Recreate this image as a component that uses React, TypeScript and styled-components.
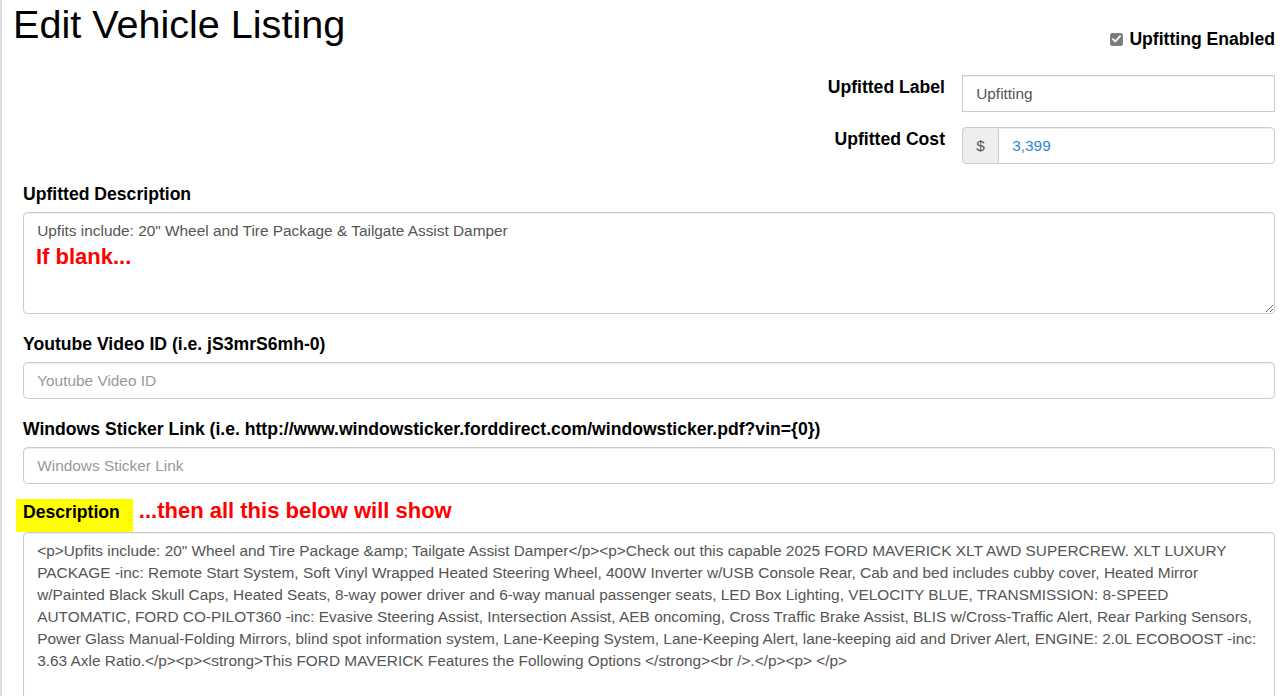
import React from "react";
import styled, { createGlobalStyle } from "styled-components";

const GlobalStyle = createGlobalStyle`
  html, body { margin: 0; padding: 0; background: #fff; }
  body { font-family: "Liberation Sans", Arial, Helvetica, sans-serif; }
`;

const Page = styled.div`
  box-sizing: border-box;
  min-height: 696px;
  border-left: 2px solid #dcdcdc;
  padding: 0 10px 0 8px;
`;

const Header = styled.div`
  display: flex;
  justify-content: space-between;
  align-items: flex-start;
`;

const Title = styled.h1`
  margin: 3px 0 0 3px;
  font-size: 39.6px;
  font-weight: 400;
  line-height: 1.1;
  color: #000;
`;

const CheckLabel = styled.label`
  display: flex;
  align-items: center;
  gap: 6px;
  margin-top: 27px;
  font-size: 17.6px;
  font-weight: 700;
  line-height: 25px;
  color: #000;
`;

const CheckBox = styled.span`
  box-sizing: border-box;
  width: 13px;
  height: 13px;
  display: inline-flex;
  align-items: center;
  justify-content: center;
  background: #7b7b7b;
  border: 1px solid #858585;
  border-radius: 2px;
  margin-top: -1px;

  svg {
    display: block;
  }
`;

const Form = styled.div`
  padding-left: 13px;
  margin-top: 22px;
`;

const InlineRows = styled.div`
  display: flex;
  flex-direction: column;
  gap: 14px;
  margin-bottom: 16px;
`;

const InlineRow = styled.div`
  display: flex;
  justify-content: flex-end;
  align-items: flex-start;
  gap: 17px;
`;

const InlineLabel = styled.label`
  padding-top: 1px;
  font-size: 17.6px;
  font-weight: 700;
  line-height: 25px;
  color: #000;
`;

const Input = styled.input<{ $square?: boolean; $width?: number }>`
  display: block;
  box-sizing: border-box;
  width: ${(p) => (p.$width ? `${p.$width}px` : "100%")};
  height: 37px;
  margin: 0;
  padding: 6.6px 13.2px;
  font: 15.4px "Liberation Sans", Arial, sans-serif;
  color: #555;
  background: #fff;
  border: 1px solid #ccc;
  border-radius: ${(p) => (p.$square ? "0" : "4.4px")};
  box-shadow: inset 0 1px 1px rgba(0, 0, 0, 0.075);
  outline: none;

  &::placeholder {
    color: #999;
  }
`;

const OffsetInput = styled(Input)`
  margin-top: 1px;
`;

const InputGroup = styled.div`
  display: flex;
  width: 313px;
  height: 37px;
  margin-top: 1px;
`;

const Addon = styled.span`
  box-sizing: border-box;
  width: 36px;
  display: flex;
  align-items: center;
  justify-content: center;
  background: #eee;
  color: #555;
  font-size: 15.4px;
  border: 1px solid #ccc;
  border-right: 0;
  border-radius: 4.4px 0 0 4.4px;
`;

const CostInput = styled(Input)`
  flex: 1;
  width: auto;
  color: #2a88d8;
  border-radius: 0 4.4px 4.4px 0;
`;

const Group = styled.div`
  margin-bottom: 16px;
`;

const BlockLabel = styled.label`
  display: block;
  padding-top: 2px;
  margin-bottom: 5px;
  font-size: 17.6px;
  font-weight: 700;
  line-height: 25px;
  color: #000;
`;

const DescSection = styled.div`
  margin-top: -1px;
`;

const DescHead = styled.div`
  display: flex;
  align-items: baseline;
  gap: 6px;
`;

const HighlightLabel = styled.label`
  display: inline-block;
  margin-left: -7px;
  padding: 1px 13px 7px 7px;
  background: #ffff00;
  font-size: 17.6px;
  font-weight: 700;
  line-height: 25px;
  color: #000;
`;

const Note = styled.span<{ $size: number }>`
  color: #ff0000;
  font-weight: 700;
  font-size: ${(p) => p.$size}px;
  line-height: ${(p) => p.$size}px;
`;

const AreaWrap = styled.div`
  position: relative;
`;

const OverNote = styled(Note)`
  position: absolute;
  left: 13px;
  top: 34px;
  pointer-events: none;
`;

const TextArea = styled.textarea<{ $h: number }>`
  display: block;
  box-sizing: border-box;
  width: 100%;
  height: ${(p) => p.$h}px;
  margin: 0;
  padding: 6.6px 13.2px;
  font: 15.4px/22px "Liberation Sans", Arial, sans-serif;
  color: #555;
  background: #fff;
  border: 1px solid #ccc;
  border-radius: 4.4px;
  box-shadow: inset 0 1px 1px rgba(0, 0, 0, 0.075);
  outline: none;
  resize: vertical;
  overflow: hidden;
`;

const description =
  '<p>Upfits include: 20" Wheel and Tire Package &amp; Tailgate Assist Damper</p><p>Check out this capable 2025 FORD MAVERICK XLT AWD SUPERCREW. XLT LUXURY PACKAGE -inc: Remote Start System, Soft Vinyl Wrapped Heated Steering Wheel, 400W Inverter w/USB Console Rear, Cab and bed includes cubby cover, Heated Mirror w/Painted Black Skull Caps, Heated Seats, 8-way power driver and 6-way manual passenger seats, LED Box Lighting, VELOCITY BLUE, TRANSMISSION: 8-SPEED AUTOMATIC, FORD CO-PILOT360 -inc: Evasive Steering Assist, Intersection Assist, AEB oncoming, Cross Traffic Brake Assist, BLIS w/Cross-Traffic Alert, Rear Parking Sensors, Power Glass Manual-Folding Mirrors, blind spot information system, Lane-Keeping System, Lane-Keeping Alert, lane-keeping aid and Driver Alert, ENGINE: 2.0L ECOBOOST -inc: 3.63 Axle Ratio.</p><p><strong>This FORD MAVERICK Features the Following Options </strong><br />.</p><p> </p>';

export default function App() {
  return (
    <>
      <GlobalStyle />
      <Page>
        <Header>
          <Title>Edit Vehicle Listing</Title>
          <CheckLabel>
            <CheckBox role="checkbox" aria-checked="true" aria-disabled="true">
              <svg width="9" height="8" viewBox="0 0 9 8" fill="none">
                <path d="M1 4.2 L3.4 6.5 L8 1.2" stroke="#fff" strokeWidth="1.8" strokeLinecap="round" strokeLinejoin="round" />
              </svg>
            </CheckBox>
            Upfitting Enabled
          </CheckLabel>
        </Header>
        <Form>
          <InlineRows>
            <InlineRow>
              <InlineLabel>Upfitted Label</InlineLabel>
              <OffsetInput $square $width={313} defaultValue="Upfitting" />
            </InlineRow>
            <InlineRow>
              <InlineLabel>Upfitted Cost</InlineLabel>
              <InputGroup>
                <Addon>$</Addon>
                <CostInput defaultValue="3,399" />
              </InputGroup>
            </InlineRow>
          </InlineRows>

          <Group>
            <BlockLabel>Upfitted Description</BlockLabel>
            <AreaWrap>
              <TextArea
                $h={102}
                defaultValue={'Upfits include: 20" Wheel and Tire Package & Tailgate Assist Damper'}
              />
              <OverNote $size={22}>If blank...</OverNote>
            </AreaWrap>
          </Group>

          <Group>
            <BlockLabel>Youtube Video ID (i.e. jS3mrS6mh-0)</BlockLabel>
            <Input placeholder="Youtube Video ID" />
          </Group>

          <Group>
            <BlockLabel>
              Windows Sticker Link (i.e. http://www.windowsticker.forddirect.com/windowsticker.pdf?vin={"{0}"})
            </BlockLabel>
            <Input placeholder="Windows Sticker Link" />
          </Group>

          <DescSection>
            <DescHead>
              <HighlightLabel>Description</HighlightLabel>
              <Note $size={22}>...then all this below will show</Note>
            </DescHead>
            <TextArea $h={200} defaultValue={description} />
          </DescSection>
        </Form>
      </Page>
    </>
  );
}
